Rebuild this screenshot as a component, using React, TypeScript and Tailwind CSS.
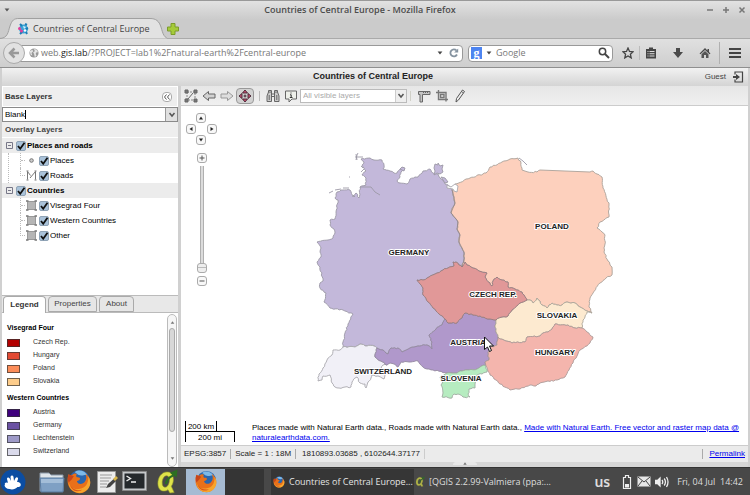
import type { ReactNode } from "react";

/* ---------- map geometry ---------- */

type Pt = [number, number];
const pts = (s: string): Pt[] => s.split(" ").map((p) => p.split(",").map(Number) as Pt);
const rev = (p: Pt[]) => [...p].reverse();

const noise = (a: number, b: number, c: number) => {
  const v = Math.sin(a * 12.9898 + b * 78.233 + c * 37.719) * 43758.5453;
  return (v - Math.floor(v)) * 2 - 1;
};

/* Splits an edge into short steps with a small sideways shift; an edge gives
   the same line in either direction, so that neighbours share their border. */
function roughen(a: Pt, b: Pt): Pt[] {
  const flip = a[0] > b[0] || (a[0] === b[0] && a[1] > b[1]);
  const [p, q] = flip ? [b, a] : [a, b];
  const dx = q[0] - p[0];
  const dy = q[1] - p[1];
  const len = Math.hypot(dx, dy);
  if (len > 30 || len < 3) return [b];
  const n = Math.max(1, Math.round(len / 2));
  const inner: Pt[] = [];
  for (let i = 1; i < n; i++) {
    const k = noise(p[0] + q[0], p[1] + q[1], i) * 0.7;
    inner.push([p[0] + (dx * i) / n - (dy / len) * k, p[1] + (dy * i) / n + (dx / len) * k]);
  }
  return [...(flip ? rev(inner) : inner), b];
}

function shape(...parts: Pt[][]) {
  const ring = parts.flat();
  const out: Pt[] = [ring[0]];
  for (let i = 0; i < ring.length; i++) out.push(...roughen(ring[i], ring[(i + 1) % ring.length]));
  return "M" + out.map((p) => p[0].toFixed(1) + " " + p[1].toFixed(1)).join("L") + "Z";
}

const dePl = pts("452,190 454,197 455,203 451,213 456,219 458,222 457,229 460,235 459,242 462,248 464,252 464,260 462,267");
const deCz = pts("462,267 459,265 456,262 453,262 454,266 448,268 443,270 435,274 429,277 423,280 417,280 420,284 423,288 423,295 428,302 433,308 439,314 445,319");
const czPl = pts("462,267 465,262 467,265 473,268 479,271 487,273 485,277 492,286 493,281 497,277 502,280 508,282 508,287 515,289 522,292 527,300");
const czSk = pts("527,300 520,303 512,310 508,316 502,317 496,320");
const atCz = pts("496,320 490,319 480,316 473,315 465,313 462,318 457,323 448,323 445,319");
const atDe = pts("445,319 442,325 436,329 429,335 432,342 432,349 427,345 418,346 410,348 402,352 398,348 391,348 388,354 383,350 377,348");
const chDe = pts("377,348 374,346 367,346 360,344 355,347 343,347");
const atSk = pts("496,320 495,327 498,337");
const atHu = pts("498,337 497,345 490,347 491,351 488,352 489,360 485,362 486,366");
const atSi = pts("486,366 484,365 480,367 477,369 469,370 462,371 455,373 447,373");
const atCh = pts("387,365 381,361 375,357 377,348");
const plSk = pts("592,313 587,311 580,307 575,303 567,302 562,305 557,305 552,303 547,308 542,305 540,301 537,298 533,303 530,300 527,300");
const skHu = pts("582,328 575,328 568,325 555,324 552,329 548,332 543,333 540,336 527,337 525,342 512,343 506,341 500,339 498,337");

const deNorth = pts(
  "343,347 343,342 345,333 348,324 353,314 343,310 330,308 324,302 326,293 320,288 320,283 323,281 320,267 317,262 321,257 320,252 321,248 317,242 328,240 333,238 335,233 334,229 330,225 330,220 335,219 336,212 338,200 335,198 337,192 341,190 350,190 353,197 356,193 359,198 360,187 366,185 366,178 362,175 366,171 364,168 362,165 364,162 361,159 370,158 374,160 382,160 384,165 383,169 390,171 394,173 397,173 400,169 403,167 404,170 401,172 400,177 397,181 400,183 407,184 410,179 415,177 418,177 423,171 430,169 433,173 438,174 440,178 443,180 445,184 448,185 452,190"
);
const plOuter = pts(
  "592,313 589,307 590,298 600,283 606,278 612,275 612,267 608,261 604,252 605,244 605,235 597,228 600,222 609,217 609,205 603,188 602,177 597,174 593,171 590,172 540,170 537,172 528,172 522,170 521,163 518,158 510,159 502,162 490,167 486,173 483,174 470,178 455,184 457,187 452,190"
);
const skEast = pts("592,313 587,312 585,317 583,320 582,328");
const huOuter = pts(
  "582,328 587,332 593,337 590,343 580,350 577,356 573,363 569,370 565,377 557,380 548,381 540,383 536,386 530,385 520,389 510,390 500,384 490,375 486,366"
);
const siOuter = pts(
  "486,366 487,372 482,374 477,375 475,380 475,388 469,389 468,394 470,397 463,397 458,394 454,394 452,398 442,397 443,393 441,385 443,381 440,377 447,373"
);
const atSouth = pts("447,373 433,370 427,369 423,367 420,364 418,361 409,362 401,362 398,367 394,364 390,363 387,365");
const chSouth = pts(
  "343,347 340,350 333,350 332,355 327,360 323,368 319,374 318,381 322,380 323,376 330,375 332,383 335,387 339,388 351,387 352,382 355,378 357,377 360,383 365,384 366,388 368,382 371,378 372,375 378,376 384,379 385,375 381,369 383,365 387,365"
);

const countries = [
  { d: shape(deNorth, dePl, deCz, atDe, chDe), fill: "#c3b8da", stroke: "#9c98a6" },
  { d: shape(plOuter, dePl, czPl, rev(plSk)), fill: "#fdd0bd", stroke: "#aaa19a" },
  { d: shape(chDe, chSouth, atCh), fill: "#f1f0f7", stroke: "#a9a8ae" },
  { d: shape(atCz, atDe, rev(atCh), rev(atSouth), rev(atSi), rev(atHu), rev(atSk)), fill: "#b098cb", stroke: "#93899f" },
  { d: shape(skEast, skHu, rev(atSk), rev(czSk), rev(plSk)), fill: "#fdead0", stroke: "#aea79b" },
  { d: shape(huOuter, rev(atHu), rev(skHu)), fill: "#f4b5ad", stroke: "#ab9a97" },
  { d: shape(siOuter, rev(atSi)), fill: "#b6ecc0", stroke: "#a0aca2" },
  { d: shape(rev(deCz), czPl, czSk, atCz), fill: "#e19898", stroke: "#967d80" },
];

const names: [string, number, number][] = [
  ["GERMANY", 409, 255],
  ["POLAND", 552, 229],
  ["CZECH REP.", 493, 297],
  ["SLOVAKIA", 557, 318],
  ["HUNGARY", 555, 355],
  ["AUSTRIA", 468, 345],
  ["SLOVENIA", 461, 381],
  ["SWITZERLAND", 383, 374],
];

function CountryMap() {
  return (
    <svg viewBox="181 106 567 312" className="block w-full" role="img" aria-label="Countries of Central Europe">
      <g strokeWidth="0.9" strokeLinejoin="round">
        {countries.map((c) => (
          <path key={c.fill} d={c.d} fill={c.fill} stroke={c.stroke} />
        ))}
        <g fill="#c3b8da" stroke="#9c98a6">
          <path d="M434 168l1-4 3 1 0-2 2 3 3-1-1 4 1 3-3 2-3-1-3 2 1-4z" />
          <path d="M441 177l4 1 3 4-3 1zM400 169l2-2 3 1-1 3z" />
        </g>
        <path d="M447 185l4 2 4-3 3 2-1 6-3-1-1-2-6-1z" fill="#fff" stroke="#a9a8ae" />
        <path
          d="M356 160l1-5 1-2M355 157l8 0M357 160l-1-6M361 166l2 2M361 172l3-3M349 177l1 0M329 193l4-2M335 190l6-1M343 188l6 0M360 187l11 0 4 5 5 3M519 158l4 3 4 4M353 195l2 2"
          fill="none"
          stroke="#9c98a6"
        />
      </g>
      <path d={"M" + dePl.map((p) => p.join(" ")).join("L")} fill="none" stroke="#85777f" strokeWidth="0.6" />
      <g
        fontFamily="'Liberation Sans', Arial, sans-serif"
        fontWeight="bold"
        fontSize="8"
        textAnchor="middle"
        fill="#222"
        stroke="#fff"
        strokeWidth="2"
        strokeLinejoin="round"
        paintOrder="stroke"
      >
        {names.map(([n, x, y]) => (
          <text key={n} x={x} y={y}>
            {n}
          </text>
        ))}
      </g>
      <path d="M484.500 337v12.500l3-2.500 2 4.500 2-1-2-4.500h4z" fill="#fff" stroke="#111" strokeWidth="1" />
    </svg>
  );
}

/* ---------- small drawings ---------- */

const Down = ({ className = "h-[5px] w-[7px]" }: { className?: string }) => (
  <svg viewBox="0 0 7 5" className={className}>
    <path d="M0.500 0.500h6L3.500 4.500z" fill="currentColor" />
  </svg>
);

const Chevron = () => (
  <svg viewBox="0 0 8 6" className="h-[6px] w-2">
    <path d="M1.500 1l2.500 3 2.500-3" fill="none" stroke="#555" strokeWidth="1.500" />
  </svg>
);

function FirefoxLogo({ className }: { className: string }) {
  return (
    <svg viewBox="0 0 24 24" className={className}>
      <circle cx="12.500" cy="11" r="10" fill="#2a66ae" />
      <path d="M8 3c4-3 10-1 12 3-3-1-4 1-7 0-2 0-3-2-5-3z" fill="#7db9e8" />
      <path
        d="M2 5c1 1 2 1 3 1 2-2 4-2 5-1-1 1-1 2 0 3 1 0 3 0 3 1 0 2-3 2-3 3 1 3 5 3 7 1 3-3 2-7 1-9 4 3 6 8 4 12-2 5-6 8-11 7C3 22-1 14 2 5z"
        fill="#e8701a"
      />
      <path d="M2 13c2 6 6 7 11 6 5-1 8-4 8-12 3 5 2 10-1 13-4 4-11 4-15 0-2-2-3-5-3-7z" fill="#f7a52c" />
      <path d="M3 15c3 5 8 6 12 5-2 2-9 3-12-5z" fill="#d9541a" />
      <path d="M2 5c1 1 2 1 3 1l2 1-2 3-3 3c-1-3-1-5 0-8z" fill="#c8451b" />
    </svg>
  );
}

function QgisLogo({ className }: { className: string }) {
  return (
    <svg viewBox="0 0 24 26" className={className}>
      <path
        d="M12 3C6 3 2.500 9 2.500 15c0 5 2.500 8 6.500 8 1.500 0 3-.5 4-1.500l2 3.500 4.500-.5-3-6.500c2-3 2.500-6 2-9C18 5 16 3 12 3zM11.500 7c2 0 3 2 3 4.500 0 4-2 7.500-4.500 7.500-2 0-3-2-3-4.500C7 10.500 9 7 11.500 7z"
        fill="#dfe34a"
        stroke="#8e9428"
        strokeWidth="0.600"
        fillRule="evenodd"
      />
      <path d="M9.500 15c1-4 4-7 8-9l-2.500-2L23 0.500 22 9l-2-2c-4 2-7 4-8 9z" fill="#2c6e22" />
    </svg>
  );
}

function Globe({ className }: { className: string }) {
  return (
    <svg viewBox="0 0 12 12" className={className}>
      <circle cx="6" cy="6" r="5.500" fill="#999" />
      <path d="M1 4l3-2 1 2-2 2 1 3-2-1zM6 1l3 1 2 3-2 0-1 2 1 2-2 2-1-4-1-2 2-1z" fill="#e6e6e6" />
    </svg>
  );
}

function GisIcon() {
  return (
    <svg viewBox="0 0 12 12" className="h-3 w-3 shrink-0">
      <circle cx="6.500" cy="6" r="4.500" fill="#3ba4d8" />
      <path d="M3 1l2 2M8 1l2 1M11 5l-2 1M9 9l1 2M5 9l-2 2" stroke="#1b7db5" strokeWidth="2" />
      <path d="M6 3l3 1-2 2z" fill="#d8f1fb" />
      <circle cx="2.500" cy="5.500" r="1.500" fill="#e23f9b" />
      <circle cx="4.500" cy="8" r="1.500" fill="#e23f9b" />
      <circle cx="8" cy="7.500" r="1.200" fill="#fff" />
    </svg>
  );
}

function ToolIcon({ children }: { children: ReactNode }) {
  return (
    <svg viewBox="0 0 14 14" className="h-[14px] w-[14px]" fill="none" stroke="#666" strokeWidth="1">
      {children}
    </svg>
  );
}

function Tool({ label, active, children }: { label: string; active?: boolean; children: ReactNode }) {
  return (
    <button
      aria-label={label}
      className={
        active
          ? "flex h-4 w-[18px] shrink-0 items-center justify-center rounded-sm border border-[#999] bg-[#d2d2d2]"
          : "flex h-4 w-[18px] shrink-0 items-center justify-center"
      }
    >
      <ToolIcon>{children}</ToolIcon>
    </button>
  );
}

/* ---------- browser ---------- */

function BrowserChrome() {
  return (
    <header className="shrink-0 font-['Open_Sans','Noto_Sans',sans-serif] text-[9px]">
      <div className="h-[38px] border-t border-[#999] bg-gradient-to-b from-[#e2e2e2] to-[#cbcbcb] to-50%">
        <div className="flex h-[17px] items-center justify-between px-1 text-[#555]">
          <button aria-label="Window menu" className="w-10">
            <Down className="h-1 w-[6px]" />
          </button>
          <h1 className="pr-[30px] font-semibold text-[#4c4c4c]">Countries of Central Europe - Mozilla Firefox</h1>
          <div className="flex w-10 shrink-0 justify-end gap-2">
            {["M1 4h6", "M1 4h6M4 1v6", "M1.500 1.500l5 5M6.500 1.500l-5 5"].map((d, i) => (
              <button key={d} aria-label={["Minimize", "Maximize", "Close"][i]}>
                <svg viewBox="0 0 8 8" className="h-2 w-2" stroke="#777" strokeWidth="1.500">
                  <path d={d} />
                </svg>
              </button>
            ))}
          </div>
        </div>
        <div className="flex h-5 items-start">
          <div role="tab" aria-selected="true" className="relative flex h-[21px] w-[167px] items-center gap-1 pl-[17px]">
            <svg viewBox="0 0 167 21" className="absolute inset-0 h-[21px] w-[167px]">
              <path
                d="M-1 20.500C8 20.500 8 14 10 8C12 2 14 0.500 19 0.500H150C156 0.500 159 3 161 9C163 16 164 20.500 170 20.500"
                fill="#e2e2e2"
                stroke="#a0a0a0"
              />
            </svg>
            <span className="relative">
              <GisIcon />
            </span>
            <span className="relative whitespace-nowrap text-[#444]">Countries of Central Europe</span>
          </div>
          <button aria-label="New tab" className="mt-[5px]">
            <svg viewBox="0 0 12 12" className="h-3 w-3">
              <path d="M4 0.500h4V4h3.500v4H8v3.500H4V8H0.500V4H4z" fill="#a5cb3a" stroke="#7c9c2a" />
            </svg>
          </button>
        </div>
      </div>
      <div className="flex h-[30px] items-center border-y border-t-[#aaa] border-b-[#8f8f8f] bg-gradient-to-b from-[#e0e0e0] to-[#cecece] pr-[9px] pl-[3px] text-[#444]">
        <button
          aria-label="Back"
          className="z-10 flex h-[22px] w-[22px] shrink-0 items-center justify-center rounded-full border border-[#aaa] bg-[#e2e2e2]"
        >
          <svg viewBox="0 0 12 12" className="h-3 w-3" fill="none" stroke="#999" strokeWidth="2.500">
            <path d="M11 6H3M6.500 1.500L2 6l4.500 4.500" />
          </svg>
        </button>
        <div className="-ml-2 flex h-[17px] flex-1 items-center gap-[2px] rounded-sm border border-[#999] bg-white pr-[3px] pl-[11px]">
          <Globe className="h-[10px] w-[10px] shrink-0" />
          <div className="flex-1 text-[#777]">
            web.<span className="text-[#222]">gis.lab</span>/?PROJECT=lab1%2Fnatural-earth%2Fcentral-europe
          </div>
          <Down className="mr-1 h-1 w-[6px]" />
          <button aria-label="Reload">
            <svg viewBox="0 0 10 10" className="h-[10px] w-[10px]" fill="none" stroke="#8593a0" strokeWidth="1.800">
              <path d="M8 6.500A3.500 3.500 0 1 1 7.500 2.500" />
              <path d="M9.200 0.500v4h-4z" fill="#8593a0" stroke="none" />
            </svg>
          </button>
        </div>
        <div className="ml-[5px] flex h-[17px] w-[145px] items-center gap-1 rounded-sm border border-[#999] bg-white px-[2px]">
          <span className="flex h-3 w-[11px] items-center justify-center bg-[#4d84f0] font-['Liberation_Serif',serif] text-[12px] leading-none font-bold text-white">
            g
          </span>
          <Down className="h-1 w-[6px]" />
          <input
            aria-label="Search with Google"
            placeholder="Google"
            className="min-w-0 flex-1 bg-transparent outline-none placeholder:text-[#777]"
          />
          <svg viewBox="0 0 12 12" className="h-3 w-3" fill="none" stroke="#444" strokeWidth="1.500">
            <circle cx="4.500" cy="4.500" r="3.200" />
            <path d="M7 7l4 4" strokeWidth="2" />
          </svg>
        </div>
        <nav className="ml-[9px] flex items-center">
          <button aria-label="Bookmark">
            <svg viewBox="0 0 12 12" className="h-3 w-3" fill="none" stroke="#444" strokeWidth="1.300">
              <path d="M6 1l1.500 3.400 3.600.4-2.700 2.400.8 3.700L6 9l-3.200 1.900.8-3.700L.9 4.800l3.600-.4z" />
            </svg>
          </button>
          <span className="ml-[5px] h-[14px] w-px bg-[#bbb]" />
          <button aria-label="Bookmarks list" className="ml-[5px]">
            <svg viewBox="0 0 12 12" className="h-3 w-3">
              <path d="M1 2h3V0.500h4V2h3v9.500H1z" fill="#444" />
              <path d="M2.500 4.500h1M4.500 4.500h5M2.500 6.700h1M4.500 6.700h5M2.500 9h1M4.500 9h5" stroke="#ddd" strokeWidth="1.100" />
            </svg>
          </button>
          <button aria-label="Downloads" className="ml-[15px]">
            <svg viewBox="0 0 12 12" className="h-3 w-3">
              <path d="M4 1h4v4h3L6 11 1 5h3z" fill="#4a4a4a" />
            </svg>
          </button>
          <button aria-label="Home" className="ml-[15px]">
            <svg viewBox="0 0 12 12" className="h-3 w-3">
              <path d="M6 1L0.500 6.500l1 .8L6 3l4.500 4.300 1-.8L10 5V2H8.500v1.500z" fill="#4a4a4a" />
              <path d="M2.500 7.200L6 4l3.500 3.200V11H7V8H5v3H2.500z" fill="#555" />
            </svg>
          </button>
          <span className="ml-[8px] h-[22px] w-px bg-[#b0b0b0]" />
          <button aria-label="Open menu" className="ml-[9px] flex w-3 flex-col gap-[2px]">
            <span className="h-[2px] bg-[#444]" />
            <span className="h-[2px] bg-[#444]" />
            <span className="h-[2px] bg-[#444]" />
          </button>
        </nav>
      </div>
    </header>
  );
}

/* ---------- side panel ---------- */

type Kind = "point" | "line" | "area";

function LayerGlyph({ kind }: { kind: Kind }) {
  return (
    <svg viewBox="0 0 11 11" className="h-[11px] w-[11px] shrink-0" fill="none" stroke="#777">
      {kind === "point" && <circle cx="5.500" cy="5.500" r="1.800" fill="#ccc" />}
      {kind === "line" && (
        <>
          <path d="M1.500 9.500v-8l3 4M4 8l5.500-6.500v8" />
          <path d="M0.500 1h2M0.500 10h2M8.500 1h2M8.500 10h2" />
        </>
      )}
      {kind === "area" && (
        <>
          <path d="M1.500 1.500h8v8h-8z" fill="#b5b5b5" stroke="#999" />
          <path d="M0 1h2.500M8.500 1H11M0 10h2.500M8.500 10H11" stroke="#777" strokeWidth="1.500" />
        </>
      )}
    </svg>
  );
}

function Check({ label, bold }: { label: string; bold?: boolean }) {
  return (
    <label className="flex items-center gap-px">
      <span className="relative flex h-[10px] w-[10px]">
        <input
          type="checkbox"
          defaultChecked
          className="peer h-[10px] w-[10px] appearance-none rounded-[2px] border border-[#8fa3b6] bg-[#a9c2d9]"
        />
        <svg viewBox="0 0 10 10" className="pointer-events-none absolute inset-0 hidden h-[10px] w-[10px] peer-checked:block">
          <path d="M2 5l2.200 2.700L8.500 1.800" fill="none" stroke="#111" strokeWidth="1.800" />
        </svg>
      </span>
      <span className={bold ? "font-bold" : ""}>{label}</span>
    </label>
  );
}

function LayerGroup({ name, layers, trunk }: { name: string; layers: [string, Kind][]; trunk?: boolean }) {
  return (
    <li>
      <div className="flex h-[15px] items-center gap-[3px] bg-[#ececec] pl-1">
        <button aria-label={`Collapse ${name}`}>
          <svg viewBox="0 0 7 7" className="h-[7px] w-[7px]" fill="none" stroke="#778">
            <path d="M0.500 0.500h6v6h-6zM2 3.500h3" />
          </svg>
        </button>
        <Check label={name} bold />
      </div>
      <ul className={trunk ? "ml-[6px] border-l border-dotted border-[#bbb] pl-[11px]" : "ml-[6px] pl-3"}>
        {layers.map(([label, kind], i) => (
          <li key={label} className="flex h-[15px] items-center">
            <span
              className={
                i === layers.length - 1
                  ? "mb-[7px] h-2 w-[5px] border-b border-l border-dotted border-[#bbb]"
                  : "flex h-[15px] w-[5px] items-center border-l border-dotted border-[#bbb] after:w-[5px] after:border-b after:border-dotted after:border-[#bbb]"
              }
            />
            <span className="mr-[2px] ml-px flex">
              <LayerGlyph kind={kind} />
            </span>
            <Check label={label} />
          </li>
        ))}
      </ul>
    </li>
  );
}

const legend: [string, [string, string][]][] = [
  ["Visegrad Four", [["Czech Rep.", "bg-[#b30000]"], ["Hungary", "bg-[#e34a33]"], ["Poland", "bg-[#fc8d59]"], ["Slovakia", "bg-[#fdcc8a]"]]],
  ["Western Countries", [["Austria", "bg-[#3f007d]"], ["Germany", "bg-[#6a51a3]"], ["Liechtenstein", "bg-[#9e9ac8]"], ["Switzerland", "bg-[#dadaeb]"]]],
];

function SidePanel() {
  return (
    <aside className="flex w-[176px] shrink-0 flex-col bg-white">
      <div className="flex h-[21px] items-center justify-between border border-white bg-[#eee] pr-[5px] pl-[2px] font-bold text-[#333]">
        <label htmlFor="base">Base Layers</label>
        <button aria-label="Collapse panel" className="flex h-[10px] w-[10px] items-center justify-center rounded-sm border border-[#aaa] bg-white">
          <svg viewBox="0 0 8 8" className="h-2 w-2" fill="none" stroke="#555">
            <path d="M3.500 1.500L1.500 4l2 2.500M6.500 1.500L4.500 4l2 2.500" />
          </svg>
        </button>
      </div>
      <div className="flex h-[15px] items-center border border-[#8a8a8a] bg-white pl-[2px]">
        <input id="base" defaultValue="Blank" className="[field-sizing:content] text-[8px] outline-none" />
        <span className="h-[9px] w-px bg-black" />
        <button aria-label="Show base layers" className="ml-auto flex h-[13px] w-3 items-center justify-center border-l border-[#999] bg-[#e0e0e0]">
          <Chevron />
        </button>
      </div>
      <h2 className="flex h-[15px] items-center bg-[#eee] pl-[3px] font-bold text-[#444]">Overlay Layers</h2>
      <ul className="mt-px flex-1">
        <LayerGroup name="Places and roads" trunk layers={[["Places", "point"], ["Roads", "line"]]} />
        <LayerGroup name="Countries" layers={[["Visegrad Four", "area"], ["Western Countries", "area"], ["Other", "area"]]} />
      </ul>
      <div role="tablist" className="flex h-[18px] items-start gap-[2px] border-t border-b border-t-[#bbb] border-b-[#bbb] bg-[#e8e8e8] px-px">
        <button role="tab" aria-selected="true" className="h-[17px] w-[43px] rounded-t-[4px] border border-b-0 border-[#aaa] bg-white font-bold text-[#333]">
          Legend
        </button>
        <button role="tab" aria-selected="false" className="h-4 w-[49px] rounded-t-[4px] border border-[#aaa] bg-[#e6e6e6] text-[#444]">
          Properties
        </button>
        <button role="tab" aria-selected="false" className="h-4 w-[35px] rounded-t-[4px] border border-[#aaa] bg-[#e6e6e6] text-[#444]">
          About
        </button>
      </div>
      <div className="flex h-[154px] shrink-0 pt-px">
        <div className="flex-1 pt-[8px] pl-[5px] text-[7px]">
          {legend.map(([title, items]) => (
            <section key={title} className="mb-1">
              <h3 className="mb-[3px] h-[11px] font-bold leading-[11px]">{title}</h3>
              <ul>
                {items.map(([name, color]) => (
                  <li key={name} className="flex h-[13px] items-center gap-[13px] text-[#333]">
                    <span className={`h-2 w-[13px] border border-[#333]/70 ${color}`} />
                    {name}
                  </li>
                ))}
              </ul>
            </section>
          ))}
        </div>
        <div className="mr-px flex w-[10px] flex-col items-center justify-between rounded-full border border-[#bbb] bg-[#f6f6f6] py-[6px] text-[#777]">
          <Down className="h-[3px] w-[5px] rotate-180" />
          <span className="mt-1 mb-auto h-[104px] w-[6px] rounded-full border border-[#aaa] bg-[#d8d8d8]" />
          <Down className="h-[3px] w-[5px]" />
        </div>
      </div>
    </aside>
  );
}

/* ---------- map panel ---------- */

function Toolbar() {
  return (
    <div className="flex h-5 shrink-0 items-center border-b border-[#ccc] bg-gradient-to-b from-[#e6e6e6] to-[#f0f0f0] pl-px">
      <Tool label="Zoom to full extent">
        <path d="M3 3h8v8H3z" stroke="#888" strokeDasharray="2 1" />
        <path d="M1 1h3v3H1zM10 1h3v3h-3zM1 10h3v3H1zM10 10h3v3h-3z" fill="#777" />
        <path d="M4 10l5-6" />
      </Tool>
      <Tool label="Previous view">
        <path d="M1 7l5.500-4.500v2.500H13v4H6.500v2.500z" fill="#d2d2d2" />
      </Tool>
      <Tool label="Next view">
        <path d="M13 7L7.500 2.500v2.500H1v4h6.500v2.500z" fill="#dedede" stroke="#999" />
      </Tool>
      <Tool label="Pan" active>
        <path d="M7 1l2.500 3h-5zM7 13l2.500-3h-5zM1 7l3-2.500v5zM13 7l-3-2.500v5z" fill="#c8506f" stroke="#402030" strokeWidth="0.900" />
        <path d="M5.500 7h3M7 5.500v3" stroke="#402030" />
      </Tool>
      <span className="mr-1 ml-[5px] h-[10px] w-px bg-[#bbb]" />
      <Tool label="Search">
        <path d="M1 12.500V7l1.500-4h3v9.500zM13 12.500V7l-1.500-4h-3v9.500z" fill="#ccc" />
        <path d="M2.500 3V1.500h3V3M8.500 3V1.500h3V3M5.500 5h3M5.500 7.500h3M3.200 6v5M10.800 6v5" />
      </Tool>
      <Tool label="Identify">
        <path d="M1.500 2h11v8H8l-3 3v-3H1.500z" fill="#eef0ea" />
        <path d="M7 3.500v1M6 5.800h1.200v2.700M5.800 8.500h2.700" stroke="#333" />
      </Tool>
      <div className="relative flex h-[14px] w-[107px] items-center">
        <select aria-label="Layers to query" className="h-[14px] w-full appearance-none border border-[#bbb] bg-white pl-[2px] text-[8px] text-[#aaa]">
          <option>All visible layers</option>
        </select>
        <span className="pointer-events-none absolute right-px flex h-3 w-[11px] items-center justify-center border-l border-[#ccc] bg-[#eee]">
          <Chevron />
        </span>
      </div>
      <span className="mr-1 ml-[3px] h-[10px] w-px bg-[#d0d0c8]" />
      <Tool label="Measure">
        <path d="M1.500 2.500H13V5.500H5.500V13H3V5.500H1.500zM6.500 2.500v1.500M8.500 2.500v1.500M10.500 2.500v1.500" fill="#c4c4c4" />
      </Tool>
      <Tool label="Crop">
        <path d="M1 3.500h10v9M3.500 1v9.500H13M5.500 5.500h3.500v3H5.500z" strokeWidth="1.400" stroke="#777" />
      </Tool>
      <Tool label="Draw">
        <path d="M3 13l.5-3.500L9.500 1l2 1.500L5.500 11z" fill="#eee" stroke="#555" />
        <path d="M8.500 2.500l2 1.500" />
      </Tool>
    </div>
  );
}

const mapButton = "flex h-[10px] w-[10px] items-center justify-center rounded-[3px] border border-[#aaa] bg-[#f8f8f8]";

function Arrow({ label, className, turn }: { label: string; className: string; turn: string }) {
  return (
    <button aria-label={label} className={`${mapButton} ${className}`}>
      <svg viewBox="0 0 6 6" className={`h-[6px] w-[6px] ${turn}`}>
        <path d="M3 1.500L5 4.500H1z" fill="#222" />
      </svg>
    </button>
  );
}

function Navigation() {
  return (
    <div className="absolute top-[7px] left-[5px] flex w-[31px] flex-col items-center">
      <div className="grid w-full grid-cols-3 grid-rows-3 place-items-center gap-y-px">
        <Arrow label="Pan north" className="col-start-2 row-start-1" turn="" />
        <Arrow label="Pan west" className="col-start-1 row-start-2" turn="-rotate-90" />
        <Arrow label="Pan east" className="col-start-3 row-start-2" turn="rotate-90" />
        <Arrow label="Pan south" className="col-start-2 row-start-3" turn="rotate-180" />
      </div>
      <button aria-label="Zoom in" className={`mt-2 ${mapButton}`}>
        <svg viewBox="0 0 6 6" className="h-[6px] w-[6px]" stroke="#555">
          <path d="M0.500 3h5M3 0.500v5" />
        </svg>
      </button>
      <div className="mt-[3px] flex h-[107px] w-[10px] justify-center">
        <input
          type="range"
          aria-label="Zoom level"
          min="0"
          max="20"
          defaultValue="0"
          className="m-0 h-[107px] w-[10px] appearance-none bg-transparent [direction:rtl] [writing-mode:vertical-lr] [&::-webkit-slider-runnable-track]:h-full [&::-webkit-slider-runnable-track]:w-[10px] [&::-webkit-slider-runnable-track]:bg-[linear-gradient(90deg,transparent_3px,#b0b0b0_3px,#b0b0b0_4px,#dcdcdc_4px,#dcdcdc_6px,#b0b0b0_6px,#b0b0b0_7px,transparent_7px)] [&::-webkit-slider-thumb]:h-[10px] [&::-webkit-slider-thumb]:w-[10px] [&::-webkit-slider-thumb]:appearance-none [&::-webkit-slider-thumb]:rounded-[3px] [&::-webkit-slider-thumb]:border [&::-webkit-slider-thumb]:border-[#aaa] [&::-webkit-slider-thumb]:bg-[linear-gradient(#eee_3px,#bbb_3px,#bbb_4px,#eee_4px)]"
        />
      </div>
      <button aria-label="Zoom out" className={`mt-[3px] ${mapButton}`}>
        <svg viewBox="0 0 6 6" className="h-[6px] w-[6px]" stroke="#555">
          <path d="M0.500 3h5" />
        </svg>
      </button>
    </div>
  );
}

function MapPanel() {
  return (
    <main className="flex min-w-0 flex-1 flex-col bg-white">
      <Toolbar />
      <div className="relative flex flex-1 flex-col">
        <CountryMap />
        <Navigation />
        <div className="mt-auto flex items-end pb-[2px]">
          <div className="mb-px ml-1 w-[50px] shrink-0 text-center">
            <div className="-mb-px h-[11px] w-8 border-x border-b border-black leading-[11px]">200 km</div>
            <div className="h-[11px] border-x border-t border-black leading-[11px]">200 mi</div>
          </div>
          <p className="ml-[17px] leading-[10px]">
            Places made with Natural Earth data., Roads made with Natural Earth data.,{" "}
            <a href="#naturalearth" className="text-[#00e] underline">
              Made with Natural Earth. Free vector and raster map data @ naturalearthdata.com.
            </a>
          </p>
        </div>
      </div>
      <footer className="flex h-[17px] shrink-0 items-center border-t border-[#ccc] bg-[#ebebeb] px-[3px] text-[#222]">
        <span>EPSG:3857</span>
        <span className="mx-1 h-[10px] w-px bg-[#aaa]" />
        <span>Scale = 1 : 18M</span>
        <span className="mr-[6px] ml-1 h-[10px] w-px bg-[#aaa]" />
        <span>1810893.03685 , 6102644.37177</span>
        <span className="ml-1 h-[10px] w-px bg-[#ccc]" />
        <span className="ml-auto h-[10px] w-px bg-[#aaa]" />
        <a href="#permalink" className="ml-[6px] text-[#00e] underline">
          Permalink
        </a>
      </footer>
      <div className="flex h-[5px] shrink-0 justify-center bg-[#d6d6d6]">
        <span className="flex h-[3px] w-6 items-center justify-center rounded-t bg-[#e8e8e8] text-[#777]">
          <Down className="h-[3px] w-1 rotate-180" />
        </span>
      </div>
    </main>
  );
}

/* ---------- desktop bar ---------- */

function Taskbar() {
  return (
    <nav className="flex h-7 shrink-0 items-center border-t border-[#333] bg-[#484848] font-['Open_Sans','Noto_Sans',sans-serif] text-[9px] text-[#ddd]">
      <button aria-label="Applications">
        <svg viewBox="0 0 26 26" className="h-[26px] w-[26px]">
          <circle cx="13" cy="13" r="12.500" fill="#0b4da2" />
          <path
            d="M5 16c-1-2 1-3 3-2l-1-4c0-2 2-2 3 0l1 2-.5-4c.5-2 2.500-2 3 0l.5 4 1.500-3c1-1.500 3-.5 2.500 1l-1 3c3 0 4.500 2 3.500 4-1 1-2 1-3 1-2 2-5 3-8 2-3 0-5-2-5-4z"
            fill="#fff"
          />
        </svg>
      </button>
      <button aria-label="Files" className="ml-[13px]">
        <svg viewBox="0 0 26 22" className="h-[22px] w-[26px]">
          <path d="M1 2h9l2 2h12v16H1z" fill="#dfe5ea" stroke="#8b99a8" />
          <path d="M1 7h24l-1 14H2z" fill="#7fa0c4" stroke="#597a9f" />
          <path d="M2 8h22l-.5 4H2z" fill="#a3bdd8" />
        </svg>
      </button>
      <button aria-label="Firefox" className="ml-px">
        <FirefoxLogo className="h-[25px] w-[26px]" />
      </button>
      <button aria-label="Text editor" className="ml-1">
        <svg viewBox="0 0 22 24" className="h-6 w-[22px]">
          <path d="M1.500 1.500h18v21h-18z" fill="#ececec" stroke="#999" />
          <path d="M4 5h12M4 8h11M4 11h9M4 14h7M4 17h6" stroke="#999" />
          <path d="M10 18l2-4 8-7 2 2-8 8z" fill="#444" />
          <path d="M17 9l3-3 2 2-3 3z" fill="#d8b54a" />
        </svg>
      </button>
      <button aria-label="Terminal" className="ml-1">
        <svg viewBox="0 0 25 21" className="h-[21px] w-[25px]">
          <path d="M0.500 0.500h24v19h-24z" fill="#c5c8ca" stroke="#888" />
          <path d="M2.500 2.500h20v15h-20z" fill="#25292c" />
          <path d="M4.500 5l4 2.500-4 2.500M9 11h5" fill="none" stroke="#eee" strokeWidth="1.400" />
        </svg>
      </button>
      <button aria-label="QGIS" className="ml-2">
        <QgisLogo className="h-[25px] w-6" />
      </button>
      <button aria-label="Workspace 1" className="ml-[7px] flex h-[26px] w-[39px] items-center justify-center bg-[#a6bbd3]">
        <FirefoxLogo className="h-[23px] w-6" />
      </button>
      <button aria-label="Workspace 2" className="h-[26px] w-[39px] bg-[#353535]" />
      <button className="ml-[7px] flex h-[26px] w-[143px] shrink-0 items-center gap-1 bg-[#363636] pl-[2px] whitespace-nowrap text-[#e4e4e4]">
        <FirefoxLogo className="h-3 w-3 shrink-0" />
        Countries of Central Europe...
      </button>
      <button className="flex h-[26px] flex-1 items-center gap-[3px] whitespace-nowrap">
        <QgisLogo className="h-[11px] w-3 shrink-0 opacity-70" />
        [QGIS 2.2.99-Valmiera (ppa:...
      </button>
      <span className="font-['Noto_Sans',sans-serif] text-[14px] font-semibold">us</span>
      <div className="ml-3 flex items-center gap-[5px]">
        <svg viewBox="0 0 10 14" className="h-[14px] w-[10px]">
          <path d="M3.500 0.500h3v2H8.500v11h-7v-11h2z" fill="none" stroke="#eee" strokeWidth="1.200" />
          <path d="M3 9h4v3.500H3z" fill="#eee" />
        </svg>
        <svg viewBox="0 0 14 11" className="h-[11px] w-[14px]">
          <path d="M0.500 0.500h13v10H0.500z" fill="#e6e6e6" />
          <path d="M1 1l6 5 6-5M1 10l4-5M13 10L9 5" fill="none" stroke="#444" />
        </svg>
        <svg viewBox="0 0 14 12" className="-ml-px h-3 w-[14px]" fill="none" stroke="#eee" strokeWidth="1.300">
          <path d="M0.500 4.500h2L5 2v8L2.500 7.500h-2z" fill="#eee" />
          <path d="M7 4q1.500 2 0 4M9.200 2.500q2.500 3.500 0 7M11.500 1q3 5 0 10" />
        </svg>
      </div>
      <time className="mr-[7px] ml-[8px] whitespace-pre">Fri, 04 Jul  14:42</time>
    </nav>
  );
}

export default function App() {
  return (
    <div className="flex h-screen flex-col bg-[#d0d0d0] font-['Liberation_Sans',Arial,sans-serif] text-[8px] text-black">
      <BrowserChrome />
      <div className="flex min-h-0 flex-1 flex-col px-[2px]">
        <div className="flex h-[18px] shrink-0 items-center bg-gradient-to-b from-[#f2f2f2] to-[#d4d4d4] pr-1">
          <span className="flex-1" />
          <h2 className="text-[9px] font-bold text-[#222]">Countries of Central Europe</h2>
          <div className="flex flex-1 items-center justify-end gap-[6px] text-[#444]">
            <span>Guest</span>
            <button aria-label="Log in">
              <svg viewBox="0 0 12 12" className="h-3 w-3" fill="none" stroke="#444" strokeWidth="1.200">
                <path d="M3 3.500V1h7.500v10H3V8.500" />
                <path d="M1 5h3V3l4 3-4 3V7H1z" fill="#444" stroke="none" />
              </svg>
            </button>
          </div>
        </div>
        <div className="flex min-h-0 flex-1 gap-[3px]">
          <SidePanel />
          <MapPanel />
        </div>
      </div>
      <Taskbar />
    </div>
  );
}
